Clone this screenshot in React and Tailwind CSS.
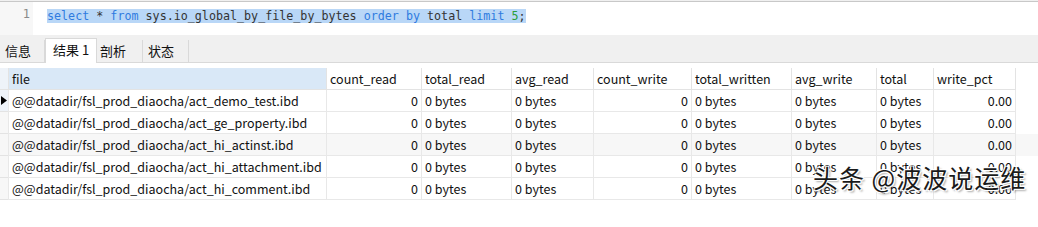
const cols = [
  { key: 'file', w: 318, align: 'left' },
  { key: 'count_read', w: 95, align: 'right' },
  { key: 'total_read', w: 90, align: 'left' },
  { key: 'avg_read', w: 82, align: 'left' },
  { key: 'count_write', w: 98, align: 'right' },
  { key: 'total_written', w: 100, align: 'left' },
  { key: 'avg_write', w: 85, align: 'left' },
  { key: 'total', w: 57, align: 'left' },
  { key: 'write_pct', w: 82, align: 'right' },
];

const files = [
  'act_demo_test.ibd',
  'act_ge_property.ibd',
  'act_hi_actinst.ibd',
  'act_hi_attachment.ibd',
  'act_hi_comment.ibd',
];

const rows = files.map((f) => ({
  file: '@@datadir/fsl_prod_diaocha/' + f,
  count_read: '0',
  total_read: '0 bytes',
  avg_read: '0 bytes',
  count_write: '0',
  total_written: '0 bytes',
  avg_write: '0 bytes',
  total: '0 bytes',
  write_pct: '0.00',
}));

const ui = { fontFamily: '"Noto Sans CJK SC", "Noto Sans", sans-serif' };
const mono = { fontFamily: '"DejaVu Sans Mono", "Liberation Mono", monospace' };

export default function App() {
  return (
    <div className="relative w-[1038px] h-[227px] bg-white overflow-hidden text-[12.5px] text-[#111]" style={ui}>
      {/* toolbar remnant */}
      <div className="h-[2px] bg-[#f0f0f0] border-b border-[#c8c8c8]" />

      {/* editor */}
      <div className="flex h-[33px]">
        <div className="w-[33px] bg-[#f7f7f7] flex justify-end pr-[3px] pt-[4px] text-[#8a8a8a] text-[12px] leading-[16px]" style={mono}>1</div>
        <div className="flex-1 pl-[14px] pt-[4px]">
          <span className="bg-[#b9d7f7] text-[11.7px] leading-[16px] text-[#333] whitespace-pre" style={mono}>
            <span className="text-[#2f7be0]">select</span> * <span className="text-[#2f7be0]">from</span> sys.io_global_by_file_by_bytes <span className="text-[#2f7be0]">order by</span> total <span className="text-[#2f7be0]">limit</span> <span className="text-[#2a9d3a]">5</span>;
          </span>
        </div>
      </div>

      {/* tabs */}
      <div className="h-[28px] bg-[#f0f0f0] border-b border-[#d9d9d9] flex items-end text-[13px]">
        <div className="w-[45px] h-[22px] border-r border-[#d9d9d9] pl-[5px] leading-[22px]">信息</div>
        <div className="w-[52px] h-[25px] bg-white border-x border-t border-[#d9d9d9] -mb-px pl-[7px] leading-[22px]">结果 1</div>
        <div className="w-[46px] h-[22px] border-r border-[#d9d9d9] pl-[3px] leading-[22px]">剖析</div>
        <div className="w-[46px] h-[22px] border-r border-[#d9d9d9] pl-[5px] leading-[22px]">状态</div>
      </div>

      {/* grid */}
      <div className="mt-[5px]">
        <div className="flex h-[22px]">
          <div className="w-[8px] bg-[#eef3f9] border-b border-[#e3e3e3]" />
          {cols.map((c, i) => (
            <div
              key={c.key}
              className={`${i === 0 ? 'bg-[#d9e8f7]' : 'bg-white'} border-l border-b border-[#e3e3e3] pl-[3px] leading-[21px] whitespace-nowrap overflow-hidden`}
              style={{ width: c.w }}
            >
              {c.key}
            </div>
          ))}
          <div className="border-l border-[#e3e3e3]" />
        </div>
        {rows.map((r, ri) => (
          <div key={ri} className={`flex h-[22px] ${ri === 2 ? 'bg-[#f7f7f7]' : 'bg-white'}`}>
            <div className={`w-[8px] border-b border-[#e3e3e3] ${ri === 0 ? 'bg-[#eef3f9]' : 'bg-[#f7f7f7]'} flex items-center`}>
              {ri === 0 && (
                <svg width="6" height="9" viewBox="0 0 6 9" className="ml-[1px]">
                  <path d="M0 0 L6 4.5 L0 9 Z" fill="#000" />
                </svg>
              )}
            </div>
            {cols.map((c) => (
              <div
                key={c.key}
                className={`border-l border-b border-[#e8e8e8] px-[3px] leading-[21px] whitespace-nowrap overflow-hidden ${c.align === 'right' ? 'text-right' : 'text-left'}`}
                style={{ width: c.w }}
              >
                {r[c.key]}
              </div>
            ))}
            <div className="border-l border-[#e8e8e8]" />
          </div>
        ))}
      </div>

      {/* watermark */}
      <div
        className="absolute left-[813px] top-[161px] text-[25px] leading-[32px] text-[#1a1a1a] tracking-[1px]"
        style={{ ...ui, textShadow: '1px 1px 0 #fff, -1px -1px 0 #fff, 1px -1px 0 #fff, -1px 1px 0 #fff, 2px 2px 2px rgba(0,0,0,0.35)' }}
      >
        头条 @波波说运维
      </div>
    </div>
  );
}
